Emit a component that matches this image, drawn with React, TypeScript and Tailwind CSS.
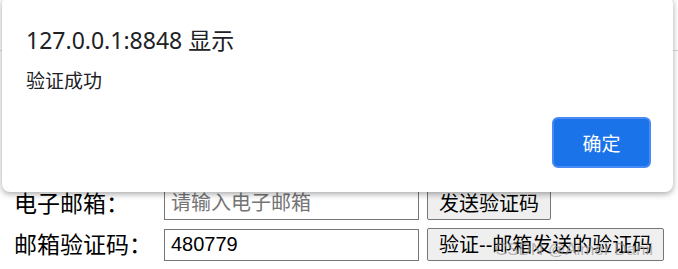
export default function App() {
  return (
    <div className="relative h-[269px] w-[678px] overflow-hidden bg-white font-['Liberation_Sans','Noto_Sans_CJK_SC',sans-serif] text-black">
      {/* page behind the alert */}
      <div className="h-[51px] border-b border-[#dadce0]" />

      <form className="flex flex-col gap-[8px] pl-[14px] pt-[136px]">
        <div className="flex items-center">
          <label className="w-[150px] text-[23px] leading-[32px]">电子邮箱：</label>
          <input
            className="h-[32px] w-[255px] border border-[#767676] px-[6px] text-[20px] placeholder:text-[#757575] focus:outline-none"
            placeholder="请输入电子邮箱"
          />
          <button
            type="button"
            className="ml-[8px] h-[33px] rounded-[2px] border border-[#767676] bg-[#efefef] px-[11px] text-[20px] leading-[30px]"
          >
            发送验证码
          </button>
        </div>
        <div className="flex items-center">
          <label className="w-[150px] text-[23px] leading-[32px]">邮箱验证码：</label>
          <input
            className="h-[32px] w-[255px] border border-[#767676] px-[6px] text-[20px] focus:outline-none"
            defaultValue="480779"
          />
          <button
            type="button"
            className="ml-[8px] h-[33px] rounded-[2px] border border-[#767676] bg-[#efefef] px-[11px] text-[20px] leading-[30px]"
          >
            验证--邮箱发送的验证码
          </button>
        </div>
      </form>

      {/* watermark */}
      <div className="pointer-events-none absolute bottom-[9px] left-[495px] text-[17px] leading-[20px] text-[#9a9a9a]/70">
        CSDN @Aimer Danii
      </div>

      {/* alert dialog */}
      <div className="absolute left-[2px] top-[-4px] flex h-[196px] w-[671px] flex-col rounded-[8px] bg-white pl-[24px] shadow-[0_2px_6px_rgba(0,0,0,0.35)] font-['Noto_Sans','Noto_Sans_CJK_SC',sans-serif]">
        <div className="mt-[29px] text-[23px] leading-[30px] text-[#202124]">127.0.0.1:8848 显示</div>
        <div className="mt-[12px] text-[19px] leading-[28px] text-[#202124]">验证成功</div>
        <div className="mt-[22px] flex justify-end pr-[22px]">
          <button
            type="button"
            className="h-[51px] w-[99px] rounded-[6px] border-2 border-[#4a8af4] bg-[#1a73e8] pt-[3px] text-[19px] text-white"
          >
            确定
          </button>
        </div>
      </div>
    </div>
  );
}
